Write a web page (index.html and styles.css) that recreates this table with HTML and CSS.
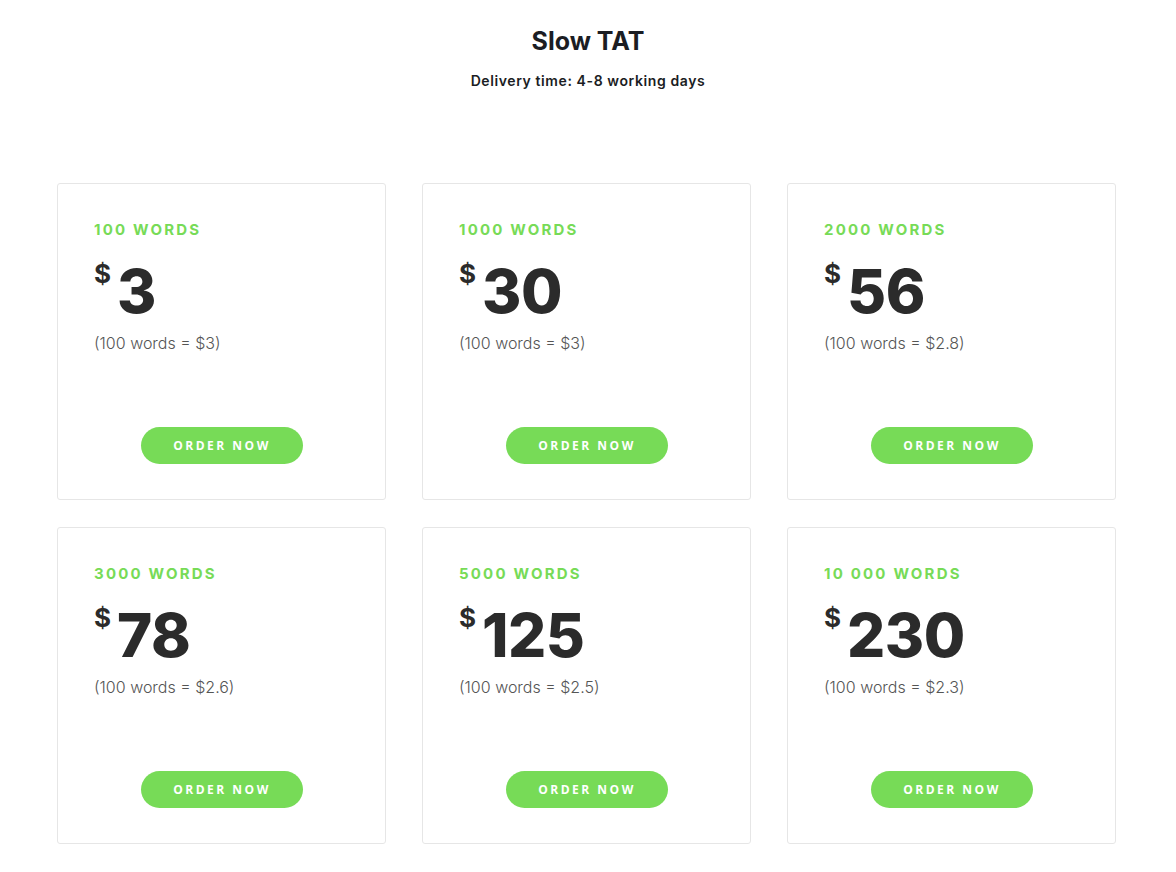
FILE: index.html
```html
<!DOCTYPE html>
<html lang="en">
<head>
<meta charset="utf-8">
<title>Slow TAT</title>
<link rel="stylesheet" href="styles.css">
</head>
<body>
<header class="header">
  <h1 class="title">Slow TAT</h1>
  <p class="subtitle">Delivery time: 4-8 working days</p>
</header>
<main class="grid">
  <div class="card">
    <div class="label">100 WORDS</div>
    <div class="price"><span class="cur">$</span><span class="amount">3</span></div>
    <div class="rate">(100 words = $3)</div>
    <a class="btn" href="#">ORDER NOW</a>
  </div>
  <div class="card">
    <div class="label">1000 WORDS</div>
    <div class="price"><span class="cur">$</span><span class="amount">30</span></div>
    <div class="rate">(100 words = $3)</div>
    <a class="btn" href="#">ORDER NOW</a>
  </div>
  <div class="card">
    <div class="label">2000 WORDS</div>
    <div class="price"><span class="cur">$</span><span class="amount">56</span></div>
    <div class="rate">(100 words = $2.8)</div>
    <a class="btn" href="#">ORDER NOW</a>
  </div>
  <div class="card">
    <div class="label">3000 WORDS</div>
    <div class="price"><span class="cur">$</span><span class="amount">78</span></div>
    <div class="rate">(100 words = $2.6)</div>
    <a class="btn" href="#">ORDER NOW</a>
  </div>
  <div class="card">
    <div class="label">5000 WORDS</div>
    <div class="price"><span class="cur">$</span><span class="amount">125</span></div>
    <div class="rate">(100 words = $2.5)</div>
    <a class="btn" href="#">ORDER NOW</a>
  </div>
  <div class="card">
    <div class="label">10 000 WORDS</div>
    <div class="price"><span class="cur">$</span><span class="amount">230</span></div>
    <div class="rate">(100 words = $2.3)</div>
    <a class="btn" href="#">ORDER NOW</a>
  </div>
</main>
</body>
</html>
```

FILE: styles.css
```css
* { box-sizing: border-box; }
html, body { margin: 0; padding: 0; background: #fff; }
body {
  font-family: "Inter", "Open Sans", sans-serif;
  color: #1b1d23;
}
.header {
  text-align: center;
  padding-top: 26px;
}
.title {
  margin: 0;
  font-size: 25px;
  line-height: 30px;
  font-weight: 700;
  color: #1b1d23;
}
.subtitle {
  margin: 15px 0 0;
  font-size: 14px;
  line-height: 20px;
  font-weight: 600;
  letter-spacing: 0.6px;
  color: #1b1d23;
}
.grid {
  width: 1059px;
  margin: 92px 0 0 57px;
  display: grid;
  grid-template-columns: repeat(3, 329px);
  column-gap: 36px;
  row-gap: 27px;
}
.card {
  height: 317px;
  border: 1px solid #e6e6e6;
  border-radius: 3px;
  padding: 36px 36px 35px;
  display: flex;
  flex-direction: column;
}
.label {
  font-size: 15px;
  line-height: 20px;
  font-weight: 700;
  letter-spacing: 2.2px;
  color: #77db57;
}
.price {
  display: flex;
  align-items: flex-start;
  margin-top: 21px;
  color: #2b2b2b;
}
.cur {
  font-size: 26px;
  line-height: 26px;
  font-weight: 700;
  margin-right: 6px;
  margin-top: 0;
}
.amount {
  font-size: 60px;
  line-height: 60px;
  font-weight: 800;
  letter-spacing: -0.5px;
}
.rate {
  margin-top: 10px;
  font-size: 16px;
  line-height: 24px;
  font-weight: 300;
  color: #555;
}
.btn {
  margin-top: auto;
  align-self: center;
  width: 162px;
  height: 37px;
  border-radius: 19px;
  background: #77db57;
  color: #fff;
  text-decoration: none;
  font-family: "Open Sans", sans-serif;
  font-size: 12px;
  font-weight: 700;
  letter-spacing: 2.5px;
  display: flex;
  align-items: center;
  justify-content: center;
  padding-left: 1px;
}
```
